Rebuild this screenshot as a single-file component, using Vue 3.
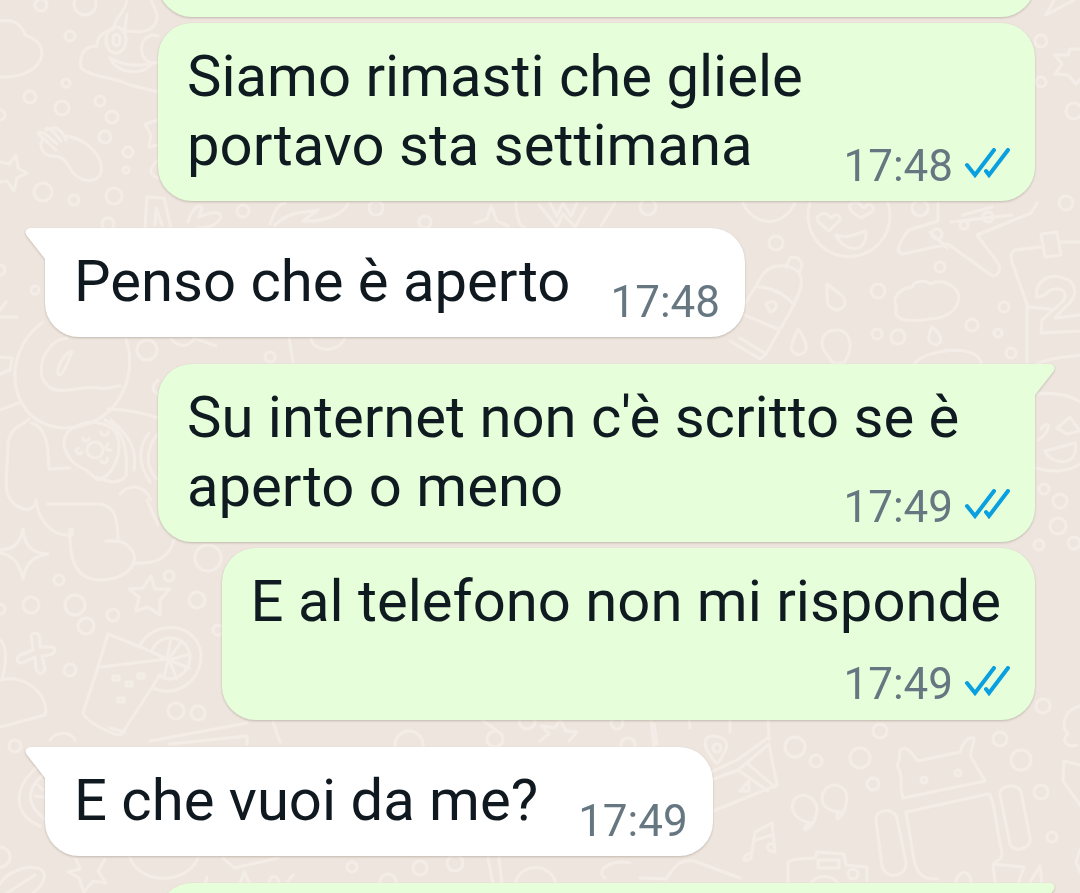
<script setup>
const messages = [
  { id: 1, side: 'out', clip: 'above' },
  { id: 2, side: 'out', text: 'Siamo rimasti che gliele portavo sta settimana', time: '17:48' },
  { id: 3, side: 'in', text: 'Penso che è aperto', time: '17:48', tail: true },
  { id: 4, side: 'out', text: "Su internet non c'è scritto se è aperto o meno", time: '17:49', tail: true },
  { id: 5, side: 'out', text: 'E al telefono non mi risponde', time: '17:49', stacked: true },
  { id: 6, side: 'in', text: 'E che vuoi da me?', time: '17:49', tail: true },
  { id: 7, side: 'out', clip: 'below', tail: true },
]

// Wallpaper bubbles: centre x, centre y, radius
const dots = [
  [41, 5, 6], [85, 4, 11], [70, 36, 5], [66, 83, 4], [30, 97, 6], [62, 108, 7], [100, 101, 5],
  [112, 117, 6], [105, 137, 6], [128, 152, 5], [43, 192, 9], [74, 200, 5], [114, 196, 8], [0, 115, 5],
  [108, 224, 6], [126, 170, 3], [243, 211, 6], [35, 290, 4], [0, 270, 5], [147, 350, 10], [270, 357, 5],
  [1041, 41, 6], [1041, 82, 5], [1074, 111, 8], [1066, 203, 7], [988, 217, 5], [964, 225, 4],
  [937, 234, 5], [940, 267, 5], [878, 291, 7], [1004, 307, 5], [972, 325, 6], [998, 333, 4],
  [877, 334, 5], [898, 337, 7], [1011, 353, 5], [776, 243, 7], [920, 208, 8],
  [59, 580, 5], [31, 605, 8], [75, 605, 10], [113, 615, 6], [86, 626, 8], [70, 670, 6], [169, 576, 5],
  [197, 600, 8], [208, 558, 13], [0, 609, 5], [176, 711, 8], [198, 713, 7], [15, 746, 6],
  [218, 630, 5], [1044, 489, 5], [1060, 501, 7], [1058, 526, 8], [1074, 543, 6], [1039, 545, 5],
  [795, 747, 10], [816, 761, 6], [860, 758, 10], [880, 731, 7], [873, 784, 6], [1000, 739, 7],
  [1021, 760, 10], [1041, 792, 7], [1052, 837, 5], [1043, 706, 7], [0, 857, 10], [352, 867, 5],
  [420, 868, 7], [455, 863, 8], [388, 882, 8], [425, 222, 6], [376, 208, 7], [648, 207, 8],
  [527, 721, 8], [617, 723, 6], [495, 739, 8], [628, 745, 7], [409, 745, 14],
]

const doodles = [
  // clouds
  'M0 21C12 19 21 23 25 35C37 39 42 46 42 54C40 70 20 78 0 77',
  'M896 305C892 298 900 288 912 287C914 280 926 280 930 284C942 278 958 286 959 297C958 311 946 318 930 319C918 320 902 324 896 314Z',
  // smiling creature
  'M113 30C115 16 126 12 127 0M127 14C126 27 121 32 130 31C148 34 158 27 157 14L151 0M97 46C97 37 103 31 113 30M97 46C85 46 79 54 81 68C92 78 112 76 130 85L158 92M106 41A10 13 0 1 0 126 39A10 13 0 1 0 106 41M113 40A3 5 0 1 0 120 40A3 5 0 1 0 113 40M158 36A12 14 0 1 0 158 62M110 58C124 66 137 66 151 64C144 76 116 74 110 58Z',
  // mitten and stars
  'M50 156C40 153 39 142 44 139L56 150M44 139L38 134C39 130 44 132 57 144M46 130C46 125 54 131 61 141M52 128C57 127 64 133 66 140M67 136C87 140 104 156 101 172C97 185 79 182 71 170C64 158 62 156 50 156',
  'M0 162L9 164L16 155L18 168L27 173L17 178L14 191L7 181L0 182',
  'M158 120L145 124L151 135L149 147L158 145M158 160C148 169 149 175 158 178',
  'M1080 49L1070 49L1068 55L1055 55L1062 64L1055 74L1068 75L1076 84L1080 79M1046 15L1054 0M1046 15L1074 0',
  'M151 576L155 589L170 589L160 600L160 615L148 607L136 611L139 597L129 589L143 588Z',
  'M23 529C24 546 32 553 48 554C32 556 25 565 23 579C20 564 13 555 0 553M0 550C15 549 20 543 23 529',
  'M31 635C35 631 40 634 40 638L40 647L53 647C57 650 54 654 49 655L42 656L45 670C42 676 37 674 36 668L35 657L22 663C16 663 16 658 20 655L33 650Z',
  // letter shape, leaves and bolt
  'M145 228L147 197L164 198L171 228M155 225L156 208L162 225M188 222C192 207 201 203 202 208L199 217C213 211 222 212 221 217C217 226 205 228 197 228M270 224C275 209 280 203 285 203M275 225C291 210 306 213 318 210L303 221C328 222 343 213 348 204',
  // round face and heart eyes
  'M810 203A41 41 0 1 0 888 203M829 231C820 224 813 218 820 215C826 211 829 216 831 218C836 212 841 216 840 220ZM861 218C851 212 846 207 852 203C859 199 861 207 864 208C869 201 874 206 873 211ZM836 235C846 239 856 234 866 231C868 253 845 254 836 235ZM743 203C754 227 783 228 795 203',
  // aeroplane
  'M938 203V221L909 230C898 243 895 253 903 254L948 244L991 275C997 278 1002 270 998 263L977 235L1031 213L1037 203M963 215L992 207M951 222L1012 215M930 232L947 248M1037 203L1031 213',
  // drops and baby bottle
  'M827 284C828 301 824 307 837 310C848 308 846 298 840 294ZM798 329C790 347 788 351 798 355C811 353 807 341 798 329ZM932 327C926 340 928 343 937 345C944 341 940 333 932 327Z',
  'M743 307L763 274C772 262 797 263 801 278C803 290 795 300 791 310L766 354L740 338M758 287C774 288 785 294 794 305M744 315L778 329M786 267L790 258C798 255 802 261 802 266L799 273M766 304C776 296 781 309 770 312ZM730 341L760 359L766 354',
  'M836 330C824 330 818 342 825 352L833 363H844C857 343 847 329 836 330ZM914 364C925 349 978 343 981 363',
  // calendar
  'M1040 247L1015 250C1010 253 1010 257 1013 265L1027 304V362M1061 242H1080M1041 234L1057 232L1061 255L1045 257ZM1027 307L1050 309M1037 297C1034 281 1050 273 1063 278C1078 281 1078 298 1066 306L1055 318L1080 315M1041 333L1042 320L1061 303C1069 296 1064 288 1056 289C1047 288 1048 297 1037 297M1041 333L1080 331',
  // planet and cat body
  'M0 317L17 317M0 310L6 302M0 357L12 358L10 370L0 374',
  'M43 322C-2 354 8 427 66 428C117 426 139 378 126 339M67 338C52 339 38 357 42 377C52 402 77 384 99 388C106 390 114 386 120 386M72 351C61 355 57 370 58 374C61 378 66 368 72 351ZM0 410L19 403M108 409C129 410 145 413 158 418M158 380C152 386 151 391 158 394M29 419C24 426 12 423 8 443C8 478 0 494 17 506C28 513 36 508 36 500C38 520 52 537 72 535V529M31 423C48 427 48 449 49 469L70 468M48 504H101C115 507 118 519 118 540M70 529C69 559 75 578 98 580C133 580 145 556 124 543C119 540 113 541 106 541M134 563C162 565 171 552 174 540M111 420C131 437 137 451 134 470M105 420C124 430 128 450 126 476C118 485 108 482 96 477',
  'M75 427C54 437 66 463 86 470L98 480C115 475 124 449 116 433C106 420 87 420 75 427M87 450A8 8 0 1 0 103 450A8 8 0 1 0 87 450M83 438A3 3 0 1 0 89 438M101 432A3 3 0 1 0 108 432M108 444A3 3 0 1 0 111 450M78 448A3 3 0 1 0 82 452M101 461A3 3 0 1 0 107 458M149 433C136 449 140 467 150 482M158 434C145 449 145 468 158 480M120 494C130 484 144 484 151 500M147 500L158 525',
  // glass with citrus slice
  'M108 634L143 648L167 659L101 667M108 634L98 667L83 713C85 721 112 735 121 735L160 675M139 647C152 620 195 620 201 653C202 684 173 698 153 688M152 650C160 632 187 634 190 656C190 675 170 685 159 675M167 659L171 638M169 659L181 642M169 660L190 654M169 660L189 668M169 660L177 679M168 660L164 678M113 676H119V680H113ZM138 674H144V678H138ZM126 682H132V686H126ZM118 698H124V702H118Z',
  'M0 640C7 645 7 661 2 680M0 680C28 673 50 698 45 715L0 727M50 740C56 731 70 731 75 740M150 741L247 723M170 744L247 736V744M273 722L280 742M110 728L124 732',
  // faces along the right edge
  'M1035 365C1048 357 1065 358 1080 355M1035 394C1056 391 1073 397 1080 402M1041 429C1051 416 1051 433 1038 440M1057 428L1070 417L1080 431L1067 434ZM1045 451L1075 443C1080 467 1051 466 1045 451M1037 468C1051 473 1068 472 1080 464',
  // robot
  'M897 765C903 756 896 750 904 748C911 749 913 757 918 761L960 752C962 745 967 736 974 738C974 746 969 753 971 757L985 781L903 798C898 784 905 780 897 765ZM906 812L988 794C994 795 995 821 1002 853C1002 864 994 858 993 866L995 882M906 812L914 860C918 877 925 879 937 879M876 821C875 807 896 808 897 819L906 862C907 878 885 880 882 866ZM1000 795C999 784 1019 783 1021 792L1030 837C1032 850 1013 853 1010 844ZM921 780A3 3 0 1 0 927 780A3 3 0 1 0 921 780M955 773A3 3 0 1 0 961 773A3 3 0 1 0 955 773',
  // quotes and notes
  'M811 823C797 821 789 811 794 800C802 790 817 798 817 809C816 820 813 826 805 830C803 827 808 824 811 823ZM840 812C825 811 820 803 823 793C830 780 847 784 847 798C846 810 843 815 838 819C835 816 838 814 840 812ZM751 858L755 832L772 823L775 852C765 851 765 842 773 844M756 840L772 835M751 858C740 866 743 854 751 853Z',
  // camera, map and pin
  'M788 884V863C790 859 798 859 815 858L817 852L844 854L846 865L867 867V880M818 860H839V868H818ZM811 884C815 874 833 874 838 884M848 874A5 5 0 1 0 858 874A5 5 0 1 0 848 874',
  'M716 763C698 742 706 735 715 736C735 740 725 752 718 763M713 748A4 4 0 1 0 721 748A4 4 0 1 0 713 748M711 772L737 760L769 737M711 780L738 770L769 744L777 785L711 812M738 770L768 791M747 763L775 787M740 791L749 781V791ZM768 720L769 740M651 720L654 747M689 720L690 728M730 720V732',
  'M640 878L666 879C678 860 684 860 694 861L740 878M605 878C594 870 613 859 630 863',
  // lower left ornaments
  'M36 768C12 790 14 815 40 826M43 775C24 791 28 807 45 819M37 784L43 790M35 796L44 797',
  'M0 884C8 870 29 866 35 868C50 869 45 884 33 893M7 893L35 875M76 859L80 869L68 872L79 878L84 892L93 881L106 883L98 871L105 859M130 858C142 887 188 883 198 858M223 858L234 868L278 858M205 884L207 877M240 884L244 872L250 884M269 884C269 874 279 874 279 884M288 881L293 875M482 720L496 730M488 858L493 884M499 858L502 884M515 884C520 862 551 862 556 884',
  // arcs between bubbles
  'M516 201C516 221 522 228 525 228M539 205L557 227L563 214L575 227L586 208M550 203L557 216L563 203L571 216L577 203M615 203L601 226M475 223L487 219L491 206L497 221L508 226M171 339C181 350 191 345 194 338L216 346M289 338L293 362M311 339C314 352 338 354 345 338M540 741L549 734L542 726L555 728L560 720L566 731L577 732L569 741M654 724L657 744',
  // partial objects by the lower right edge
  'M1080 706C1063 710 1061 727 1068 734C1060 741 1068 748 1077 745M1080 765L1064 761L1063 781L1080 805M1080 850L1076 862L1080 872M993 864L1024 867L1018 884M1030 882L1040 866L1042 884M955 884C958 870 970 868 971 882',
]
</script>

<template>
  <main class="chat">
    <svg class="wallpaper" viewBox="0 0 1080 893" preserveAspectRatio="xMidYMid slice" aria-hidden="true">
      <path v-for="(d, i) in doodles" :key="'p' + i" :d="d" />
      <circle v-for="(c, i) in dots" :key="'c' + i" :cx="c[0]" :cy="c[1]" :r="c[2]" />
    </svg>

    <ol class="thread">
      <li
        v-for="m in messages"
        :key="m.id"
        class="bubble"
        :class="[m.side, m.clip, { tailed: m.tail, stacked: m.stacked }]"
      >
        <svg v-if="m.tail" class="tail" viewBox="0 0 21 32" aria-hidden="true">
          <path d="M21 0H6C1 0 -1 4 2 8L20 31H21Z" />
        </svg>
        <template v-if="m.text">
          {{ m.text }}
          <span class="meta">
            <time>{{ m.time }}</time>
            <svg v-if="m.side === 'out'" class="checks" viewBox="0 0 45 30" role="img" aria-label="Letto">
              <path d="M2 17L10 27L29 2M21 23L24 27L43 2" />
            </svg>
          </span>
        </template>
      </li>
    </ol>
  </main>
</template>

<style scoped>
.chat {
  position: relative;
  height: 100vh;
  overflow: hidden;
  background: #eee6de;
  font-family: Roboto, "Liberation Sans", sans-serif;
  color: #0f1b20;
}
.wallpaper {
  position: absolute;
  inset: 0;
  width: 100%;
  height: 100%;
  fill: none;
  stroke: #f4ede7;
  stroke-width: 3;
  stroke-linecap: round;
  stroke-linejoin: round;
}
.thread {
  position: relative;
  display: flex;
  flex-direction: column;
  gap: 6px;
  margin: 0;
  padding: 0 45px;
  list-style: none;
}
.bubble {
  position: relative;
  display: flow-root;
  box-sizing: border-box;
  max-width: calc(100% - 113px);
  padding: 19px 25px 8px 29px;
  border-radius: 34px;
  font-size: 58px;
  line-height: 69px;
  filter: drop-shadow(0 1px 1px rgba(60, 45, 30, 0.25));
}
.in {
  align-self: flex-start;
  background: #ffffff;
  color: #10191f;
}
.out {
  align-self: flex-end;
  background: #e6ffda;
}
.tailed {
  margin-top: 21px;
}
.in.tailed {
  border-top-left-radius: 0;
}
.out.tailed {
  border-top-right-radius: 0;
}
.above,
.below {
  width: 100%;
  height: 80px;
}
.above {
  margin-top: -63px;
}
.tail {
  position: absolute;
  top: 0;
  left: -20px;
  width: 21px;
  height: 32px;
  fill: #ffffff;
}
.out .tail {
  left: auto;
  right: -20px;
  transform: scaleX(-1);
  fill: #e6ffda;
}
.meta {
  float: right;
  display: flex;
  align-items: center;
  gap: 12px;
  margin: 28px 0 0 40px;
  font-size: 44px;
  line-height: 54px;
  color: #667781;
}
.checks {
  width: 45px;
  height: 30px;
  margin-bottom: 6px;
  fill: none;
  stroke: #0a9fdf;
  stroke-width: 4;
  stroke-linecap: round;
}
.stacked {
  padding-right: 34px;
  padding-bottom: 9px;
}
.stacked .meta {
  float: none;
  justify-content: flex-end;
  margin: 21px -9px 0 0;
}
</style>

<style>
body {
  margin: 0;
}
</style>
